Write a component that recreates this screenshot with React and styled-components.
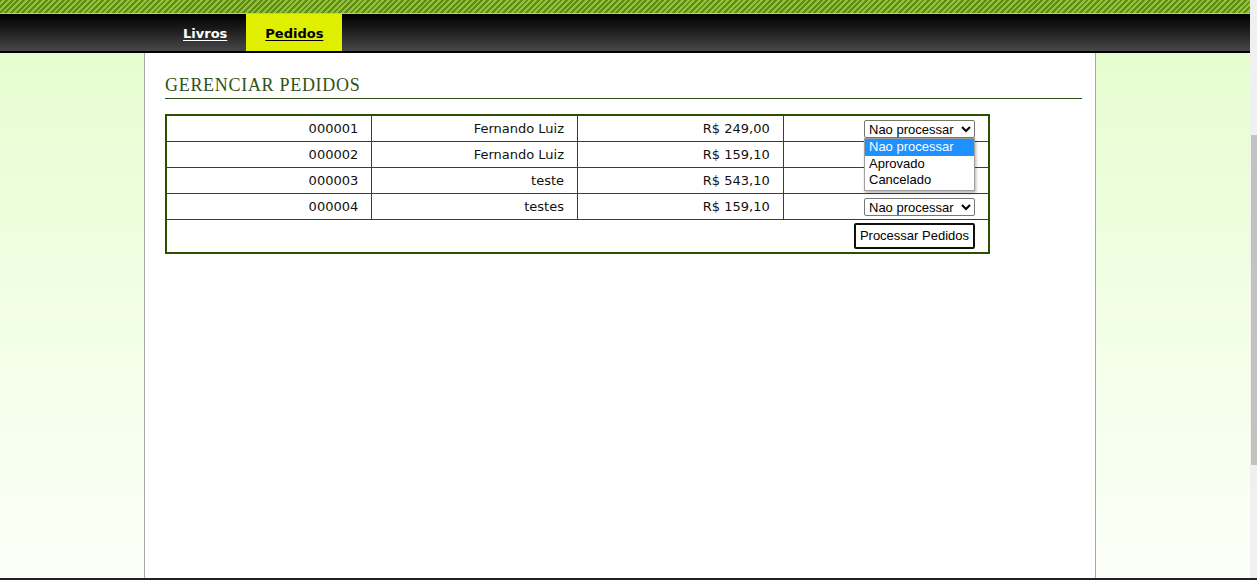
import React from 'react';
import styled, { createGlobalStyle } from 'styled-components';

const GlobalStyle = createGlobalStyle`
  html, body {
    margin: 0;
    padding: 0;
    height: 100%;
    overflow: hidden;
  }
  #root {
    height: 100%;
  }
  * {
    box-sizing: border-box;
  }
`;

const pedidos = [
  { id: '000001', cliente: 'Fernando Luiz', valor: 'R$ 249,00' },
  { id: '000002', cliente: 'Fernando Luiz', valor: 'R$ 159,10' },
  { id: '000003', cliente: 'teste', valor: 'R$ 543,10' },
  { id: '000004', cliente: 'testes', valor: 'R$ 159,10' },
];

const opcoes = ['Nao processar', 'Aprovado', 'Cancelado'];

export default function App() {
  return (
    <>
      <GlobalStyle />
      <Screen>
        <Page>
          <Stripe />
          <NavBar>
            <NavItem href="#">Livros</NavItem>
            <NavItem href="#" $active>Pedidos</NavItem>
          </NavBar>
          <Body>
            <Content>
              <Title>GERENCIAR PEDIDOS</Title>
              <Table>
                <tbody>
                  {pedidos.map((p, i) => (
                    <tr key={p.id}>
                      <Cell>{p.id}</Cell>
                      <Cell>{p.cliente}</Cell>
                      <Cell>{p.valor}</Cell>
                      <SelectCell>
                        <Select defaultValue="Nao processar">
                          {opcoes.map((o) => (
                            <option key={o}>{o}</option>
                          ))}
                        </Select>
                        {i === 0 && (
                          <DropList>
                            {opcoes.map((o, j) => (
                              <DropOption key={o} $selected={j === 0}>{o}</DropOption>
                            ))}
                          </DropList>
                        )}
                      </SelectCell>
                    </tr>
                  ))}
                  <tr>
                    <ButtonCell colSpan={4}>
                      <Button>Processar Pedidos</Button>
                    </ButtonCell>
                  </tr>
                </tbody>
              </Table>
            </Content>
          </Body>
        </Page>
        <Scrollbar>
          <Thumb />
        </Scrollbar>
      </Screen>
      <TaskLine />
    </>
  );
}

const Screen = styled.div`
  display: flex;
  height: calc(100% - 2px);
`;

const Page = styled.div`
  flex: 1;
  display: flex;
  flex-direction: column;
  min-width: 0;
`;

const Stripe = styled.div`
  height: 14px;
  flex-shrink: 0;
  border-bottom: 1px solid #b4d46a;
  background: repeating-linear-gradient(
    135deg,
    #5f8c14 0px,
    #5f8c14 2px,
    #93c23a 2px,
    #93c23a 4px
  );
`;

const NavBar = styled.div`
  height: 39px;
  flex-shrink: 0;
  display: flex;
  padding-left: 164px;
  background: linear-gradient(to bottom, #000 0%, #1a1a1a 40%, #484848 100%);
  border-bottom: 2px solid #000;
`;

const NavItem = styled.a`
  display: flex;
  align-items: center;
  padding: 2px 19px 0;
  font-family: 'DejaVu Sans', Verdana, sans-serif;
  font-size: 13px;
  font-weight: bold;
  color: ${(p) => (p.$active ? '#000' : '#fff')};
  background: ${(p) => (p.$active ? '#e0ef00' : 'transparent')};
  text-decoration: underline;
  text-underline-offset: 2px;
`;

const Body = styled.div`
  flex: 1;
  display: flex;
  background: linear-gradient(to bottom, #e6fdd0 0%, #f4ffea 60%, #fcfff8 100%);
`;

const Content = styled.div`
  margin-left: 144px;
  width: 952px;
  background: #fff;
  border-left: 1px solid #a8a8a8;
  border-right: 1px solid #a8a8a8;
  padding: 22px 13px 0 20px;
`;

const Title = styled.h2`
  margin: 0 0 15px;
  padding-bottom: 2px;
  font-family: 'Liberation Serif', Georgia, serif;
  font-weight: normal;
  font-size: 18px;
  letter-spacing: 0.7px;
  color: #2f5212;
  border-bottom: 1px solid #2f5212;
`;

const Table = styled.table`
  width: 825px;
  border-collapse: collapse;
  border: 2px solid #2d5000;
  table-layout: fixed;
`;

const Cell = styled.td`
  height: 26px;
  padding: 0 13px;
  text-align: right;
  border: 1px solid #2d5000;
  font-family: 'DejaVu Sans', Verdana, sans-serif;
  font-size: 13px;
  color: #111;
`;

const SelectCell = styled(Cell)`
  position: relative;
  padding: 2px 13px 0 0;
`;

const Select = styled.select`
  width: 111px;
  height: 18px;
  padding: 0;
  font-family: 'Liberation Sans', Arial, sans-serif;
  font-size: 13px;
  color: #000;
  background: #fff;
  border: 1px solid #767676;
  border-radius: 2px;
  vertical-align: middle;
`;

const DropList = styled.div`
  position: absolute;
  top: 22px;
  right: 13px;
  width: 111px;
  z-index: 2;
  background: #fff;
  border: 1px solid #a0a0a0;
  box-shadow: 1px 2px 3px rgba(0, 0, 0, 0.3);
  text-align: left;
  padding-bottom: 1px;
`;

const DropOption = styled.div`
  height: 16.5px;
  line-height: 16px;
  padding-left: 4px;
  font-family: 'Liberation Sans', Arial, sans-serif;
  font-size: 13px;
  color: ${(p) => (p.$selected ? '#fff' : '#000')};
  background: ${(p) => (p.$selected ? '#1e90ff' : '#fff')};
`;

const ButtonCell = styled(Cell)`
  height: auto;
  padding: 3px 13px 3px;
  line-height: 0;
`;

const Button = styled.button`
  height: 26px;
  padding: 0 4px;
  font-family: 'Liberation Sans', Arial, sans-serif;
  font-size: 13px;
  line-height: normal;
  color: #000;
  background: #fff;
  border: 2px solid #111;
  border-radius: 2px;
`;

const Scrollbar = styled.div`
  width: 7px;
  flex-shrink: 0;
  background: #f0f0f0;
  padding-top: 135px;
`;

const Thumb = styled.div`
  height: 330px;
  margin-left: 1px;
  background: #c2c2c2;
`;

const TaskLine = styled.div`
  height: 2px;
  background: #222;
`;
